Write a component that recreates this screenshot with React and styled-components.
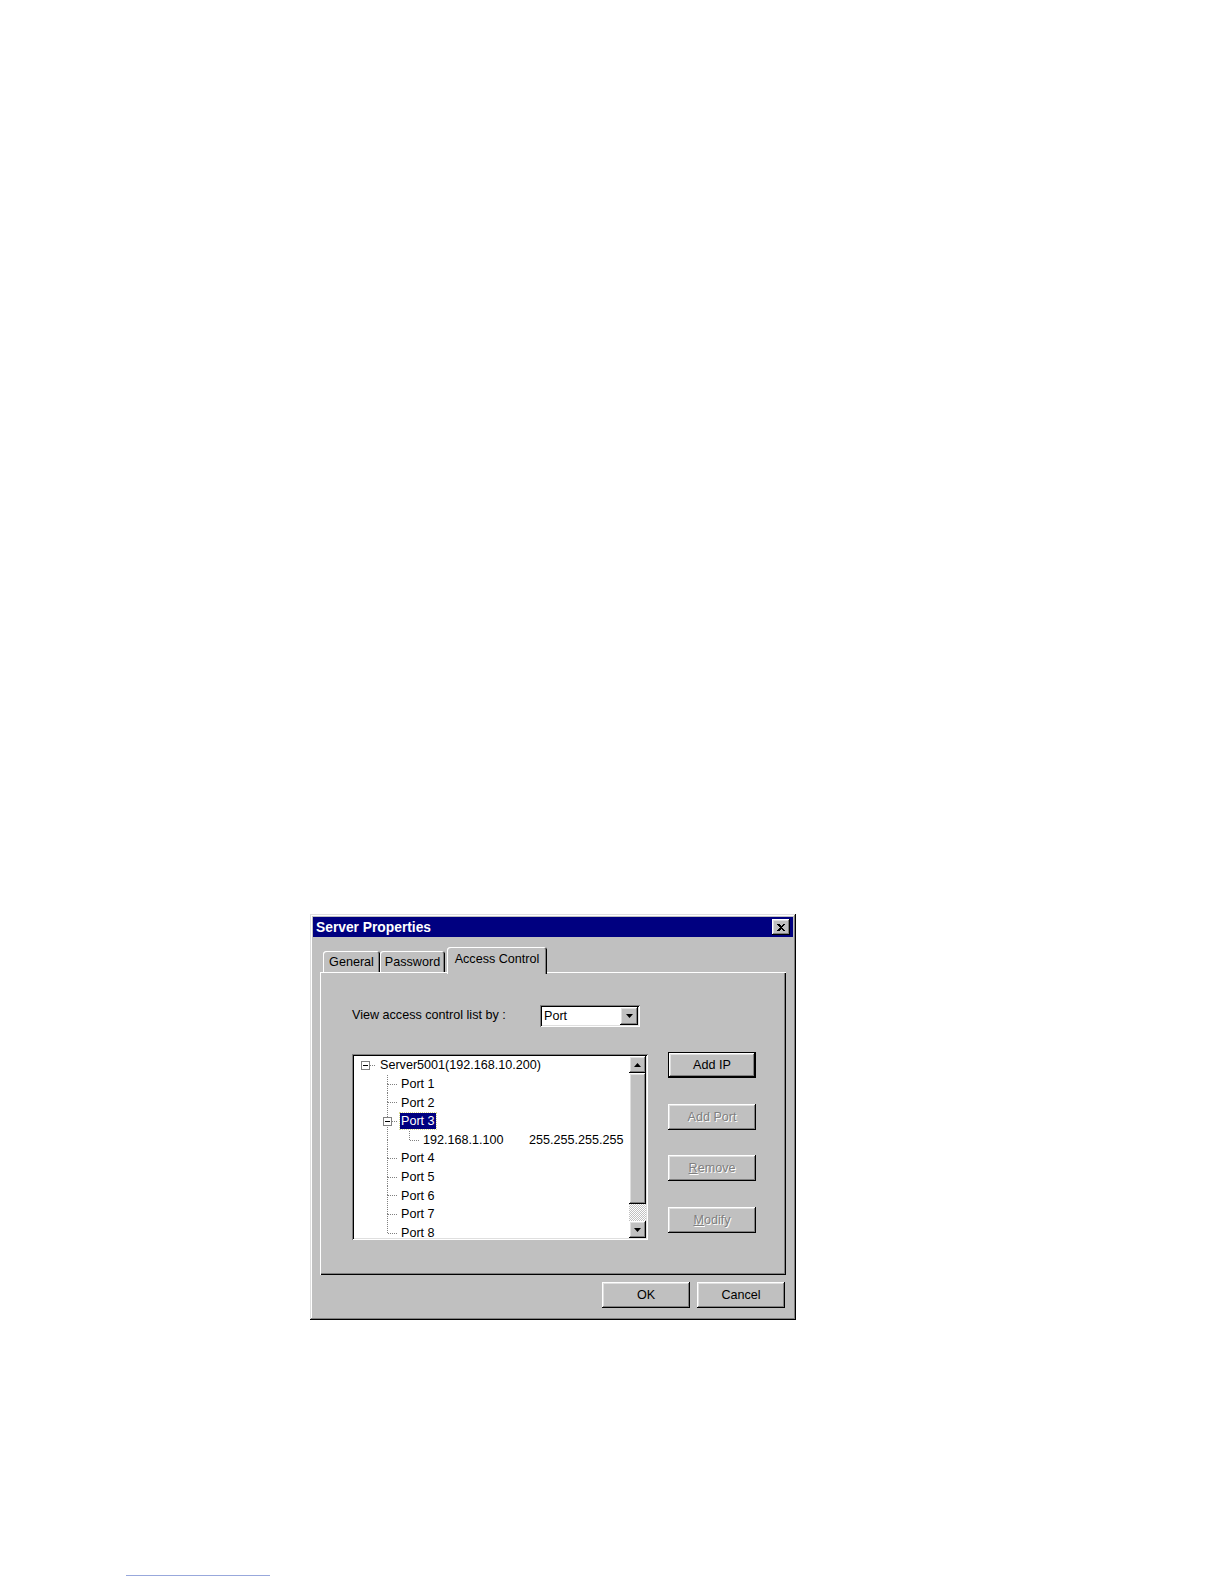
import React from 'react';
import styled, { createGlobalStyle, css } from 'styled-components';

const GlobalStyle = createGlobalStyle`
  html, body { margin: 0; padding: 0; background: #fff; }
  body { font-family: "Liberation Sans", Arial, sans-serif; }
  * { box-sizing: border-box; }
`;

const raised = css`
  box-shadow: inset -1px -1px #000, inset 1px 1px #fff, inset -2px -2px #808080, inset 2px 2px #dfdfdf;
`;

const sunken = css`
  box-shadow: inset 1px 1px #808080, inset -1px -1px #fff, inset 2px 2px #000, inset -2px -2px #dfdfdf;
`;

const Page = styled.div`
  width: 1224px;
  min-height: 1584px;
  padding-top: 914px;
  display: flex;
  flex-direction: column;
  align-items: flex-start;
`;

const Dialog = styled.div`
  margin-left: 310px;
  width: 486px;
  height: 406px;
  padding: 3px;
  background: #c0c0c0;
  box-shadow: inset -1px -1px #000, inset 1px 1px #dfdfdf, inset -2px -2px #808080, inset 2px 2px #fff;
  display: flex;
  flex-direction: column;
  font-family: "Liberation Sans", Arial, sans-serif;
  font-size: 12.6px;
  color: #000;
`;

const TitleBar = styled.div`
  height: 20px;
  flex: 0 0 20px;
  background: #000080;
  display: flex;
  align-items: center;
  justify-content: space-between;
  padding: 0 3px 0 3px;
`;

const TitleText = styled.span`
  color: #fff;
  font-weight: bold;
  font-size: 13.8px;
`;

const CloseButton = styled.div`
  width: 18px;
  height: 16px;
  background: #c0c0c0;
  ${raised};
  display: flex;
  align-items: center;
  justify-content: center;
`;

const Content = styled.div`
  flex: 1;
  padding: 10px 7px 9px 7px;
  display: flex;
  flex-direction: column;
`;

const TabStrip = styled.div`
  display: flex;
  align-items: flex-end;
  height: 25px;
  flex: 0 0 25px;
  padding-left: 3px;
`;

const Tab = styled.div`
  position: relative;
  width: ${(p) => p.$w}px;
  height: ${(p) => (p.$selected ? 27 : 21)}px;
  margin-bottom: ${(p) => (p.$selected ? -2 : 0)}px;
  margin-left: ${(p) => p.$ml || 0}px;
  z-index: ${(p) => (p.$selected ? 2 : 1)};
  background: #c0c0c0;
  border-radius: 3px 3px 0 0;
  box-shadow: inset 1px 1px #fff, inset -1px 0 #000, inset -2px 0 #808080;
  display: flex;
  align-items: center;
  justify-content: center;
  padding-bottom: ${(p) => (p.$selected ? 4 : 0)}px;
  padding-top: ${(p) => (p.$selected ? 0 : 1)}px;
`;

const Panel = styled.div`
  flex: 0 0 303px;
  height: 303px;
  background: #c0c0c0;
  box-shadow: inset 1px 1px #fff, inset -1px -1px #000, inset -2px -2px #808080;
  padding: 33px 0 0 32px;
  display: flex;
  flex-direction: column;
`;

const LabelRow = styled.div`
  display: flex;
  align-items: center;
  height: 22px;
`;

const FieldLabel = styled.span`
  width: 188px;
  padding-bottom: 3px;
`;

const Combo = styled.div`
  width: 100px;
  height: 22px;
  background: #fff;
  ${sunken};
  padding: 2px;
  display: flex;
  align-items: center;
`;

const ComboText = styled.span`
  flex: 1;
  padding-left: 2px;
`;

const ArrowButton = styled.div`
  width: ${(p) => p.$w || 17}px;
  height: ${(p) => p.$h || 17}px;
  flex: 0 0 ${(p) => p.$h || 17}px;
  background: #c0c0c0;
  ${raised};
  display: flex;
  align-items: center;
  justify-content: center;
`;

const MainRow = styled.div`
  display: flex;
  align-items: flex-start;
  margin-top: 25px;
`;

const TreeBox = styled.div`
  margin-top: 2px;
  width: 296px;
  height: 186px;
  background: #fff;
  ${sunken};
  padding: 2px;
  display: flex;
`;

const TreeList = styled.div`
  flex: 1;
  overflow: hidden;
  display: flex;
  flex-direction: column;
`;

const Row = styled.div`
  display: flex;
  align-items: center;
  height: 18.64px;
  flex: 0 0 18.64px;
`;

const Cell = styled.div`
  width: 22px;
  height: 100%;
  flex: 0 0 22px;
  display: grid;
  & > * { grid-area: 1 / 1; }
`;

const ExpBox = styled.span`
  place-self: center;
  width: 9px;
  height: 9px;
  border: 1px solid #808080;
  background: #fff;
  display: flex;
  align-items: center;
  justify-content: center;
  margin-left: 1px;
  &::after {
    content: '';
    width: 5px;
    height: 1px;
    background: #000;
  }
`;

const NodeLabel = styled.span`
  margin-left: ${(p) => p.$ml ?? 2}px;
  padding: 0 1px;
  height: 16px;
  line-height: 16px;
  white-space: nowrap;
  background: ${(p) => (p.$selected ? '#000080' : 'transparent')};
  color: ${(p) => (p.$selected ? '#fff' : '#000')};
  outline: ${(p) => (p.$selected ? '1px dotted #d8d890' : 'none')};
`;

const IpColumn = styled.span`
  display: inline-block;
  width: 106px;
`;

const ScrollBar = styled.div`
  width: 17px;
  flex: 0 0 17px;
  display: flex;
  flex-direction: column;
`;

const Thumb = styled.div`
  height: 131px;
  flex: 0 0 131px;
  background: #c0c0c0;
  ${raised};
`;

const Track = styled.div`
  flex: 1;
  background-color: #c0c0c0;
  background-image: repeating-conic-gradient(#fff 0 25%, #c0c0c0 0 50%);
  background-size: 2px 2px;
`;

const ButtonColumn = styled.div`
  margin-left: 20px;
  display: flex;
  flex-direction: column;
  gap: 25.5px;
`;

const Button = styled.div`
  width: 88px;
  height: 26px;
  background: #c0c0c0;
  display: flex;
  align-items: center;
  justify-content: center;
  color: ${(p) => (p.$disabled ? '#808080' : '#000')};
  text-shadow: ${(p) => (p.$disabled ? '1px 1px 0 #fff' : 'none')};
  ${(p) =>
    p.$default
      ? css`
          box-shadow: inset 0 0 0 1px #000, inset -2px -2px #000, inset 2px 2px #fff, inset -3px -3px #808080, inset 3px 3px #dfdfdf;
        `
      : raised};
`;

const Footer = styled.div`
  display: flex;
  justify-content: flex-end;
  gap: 7px;
  margin-top: 7px;
  padding-right: 1px;
`;

const FootRule = styled.div`
  margin-left: 126px;
  margin-top: 255px;
  width: 144px;
  height: 1px;
  background: #98a8dc;
`;

const Tri = ({ down }) => (
  <svg width="7" height="4" viewBox="0 0 7 4" style={{ display: 'block' }}>
    {down ? <polygon points="0,0 7,0 3.5,4" fill="#000" /> : <polygon points="0,4 7,4 3.5,0" fill="#000" />}
  </svg>
);

const Lines = ({ up, down, right }) => (
  <svg width="22" height="100%" style={{ display: 'block' }} shapeRendering="crispEdges">
    {up && <line x1="11.5" y1="0" x2="11.5" y2="50%" stroke="#808080" strokeDasharray="1 1" />}
    {down && <line x1="11.5" y1="50%" x2="11.5" y2="100%" stroke="#808080" strokeDasharray="1 1" />}
    {right && <line x1="12" y1="50%" x2="22" y2="50%" stroke="#808080" strokeDasharray="1 1" />}
  </svg>
);

const TreeCell = ({ up, down, right, box }) => (
  <Cell>
    <Lines up={up} down={down} right={right} />
    {box && <ExpBox />}
  </Cell>
);

const tee = { up: true, down: true, right: true };
const elbow = { up: true, right: true };

const rows = [
  { cells: [{ box: true, right: true }], label: 'Server5001(192.168.10.200)', ml: 3 },
  { cells: [{}, tee], label: 'Port 1' },
  { cells: [{}, tee], label: 'Port 2' },
  { cells: [{}, { ...tee, box: true }], label: 'Port 3', selected: true },
  { cells: [{}, { up: true, down: true }, elbow], label: '192.168.1.100', mask: '255.255.255.255' },
  { cells: [{}, tee], label: 'Port 4' },
  { cells: [{}, tee], label: 'Port 5' },
  { cells: [{}, tee], label: 'Port 6' },
  { cells: [{}, tee], label: 'Port 7' },
  { cells: [{}, elbow], label: 'Port 8' },
];

export default function App() {
  return (
    <>
      <GlobalStyle />
      <Page>
        <Dialog>
          <TitleBar>
            <TitleText>Server Properties</TitleText>
            <CloseButton>
              <svg width="8" height="7" viewBox="0 0 8 7" style={{ display: 'block' }} shapeRendering="crispEdges">
                <path d="M0 0h2l2 2 2-2h2L5 3.5 8 7H6L4 5 2 7H0l3-3.5z" fill="#000" />
              </svg>
            </CloseButton>
          </TitleBar>
          <Content>
            <TabStrip>
              <Tab $w={57}>General</Tab>
              <Tab $w={65}>Password</Tab>
              <Tab $w={100} $ml={2} $selected>Access Control</Tab>
            </TabStrip>
            <Panel>
              <LabelRow>
                <FieldLabel>View access control list by :</FieldLabel>
                <Combo>
                  <ComboText>Port</ComboText>
                  <ArrowButton $w={17} $h={18}>
                    <Tri down />
                  </ArrowButton>
                </Combo>
              </LabelRow>
              <MainRow>
                <TreeBox>
                  <TreeList>
                    {rows.map((r) => (
                      <Row key={r.label}>
                        {r.cells.map((c, i) => (
                          <TreeCell key={i} {...c} />
                        ))}
                        <NodeLabel $selected={r.selected} $ml={r.ml}>
                          {r.mask ? (
                            <>
                              <IpColumn>{r.label}</IpColumn>
                              {r.mask}
                            </>
                          ) : (
                            r.label
                          )}
                        </NodeLabel>
                      </Row>
                    ))}
                  </TreeList>
                  <ScrollBar>
                    <ArrowButton>
                      <Tri />
                    </ArrowButton>
                    <Thumb />
                    <Track />
                    <ArrowButton>
                      <Tri down />
                    </ArrowButton>
                  </ScrollBar>
                </TreeBox>
                <ButtonColumn>
                  <Button $default>Add IP</Button>
                  <Button $disabled>Add Port</Button>
                  <Button $disabled>
                    <u>R</u>emove
                  </Button>
                  <Button $disabled>
                    <u>M</u>odify
                  </Button>
                </ButtonColumn>
              </MainRow>
            </Panel>
            <Footer>
              <Button>OK</Button>
              <Button>Cancel</Button>
            </Footer>
          </Content>
        </Dialog>
        <FootRule />
      </Page>
    </>
  );
}
